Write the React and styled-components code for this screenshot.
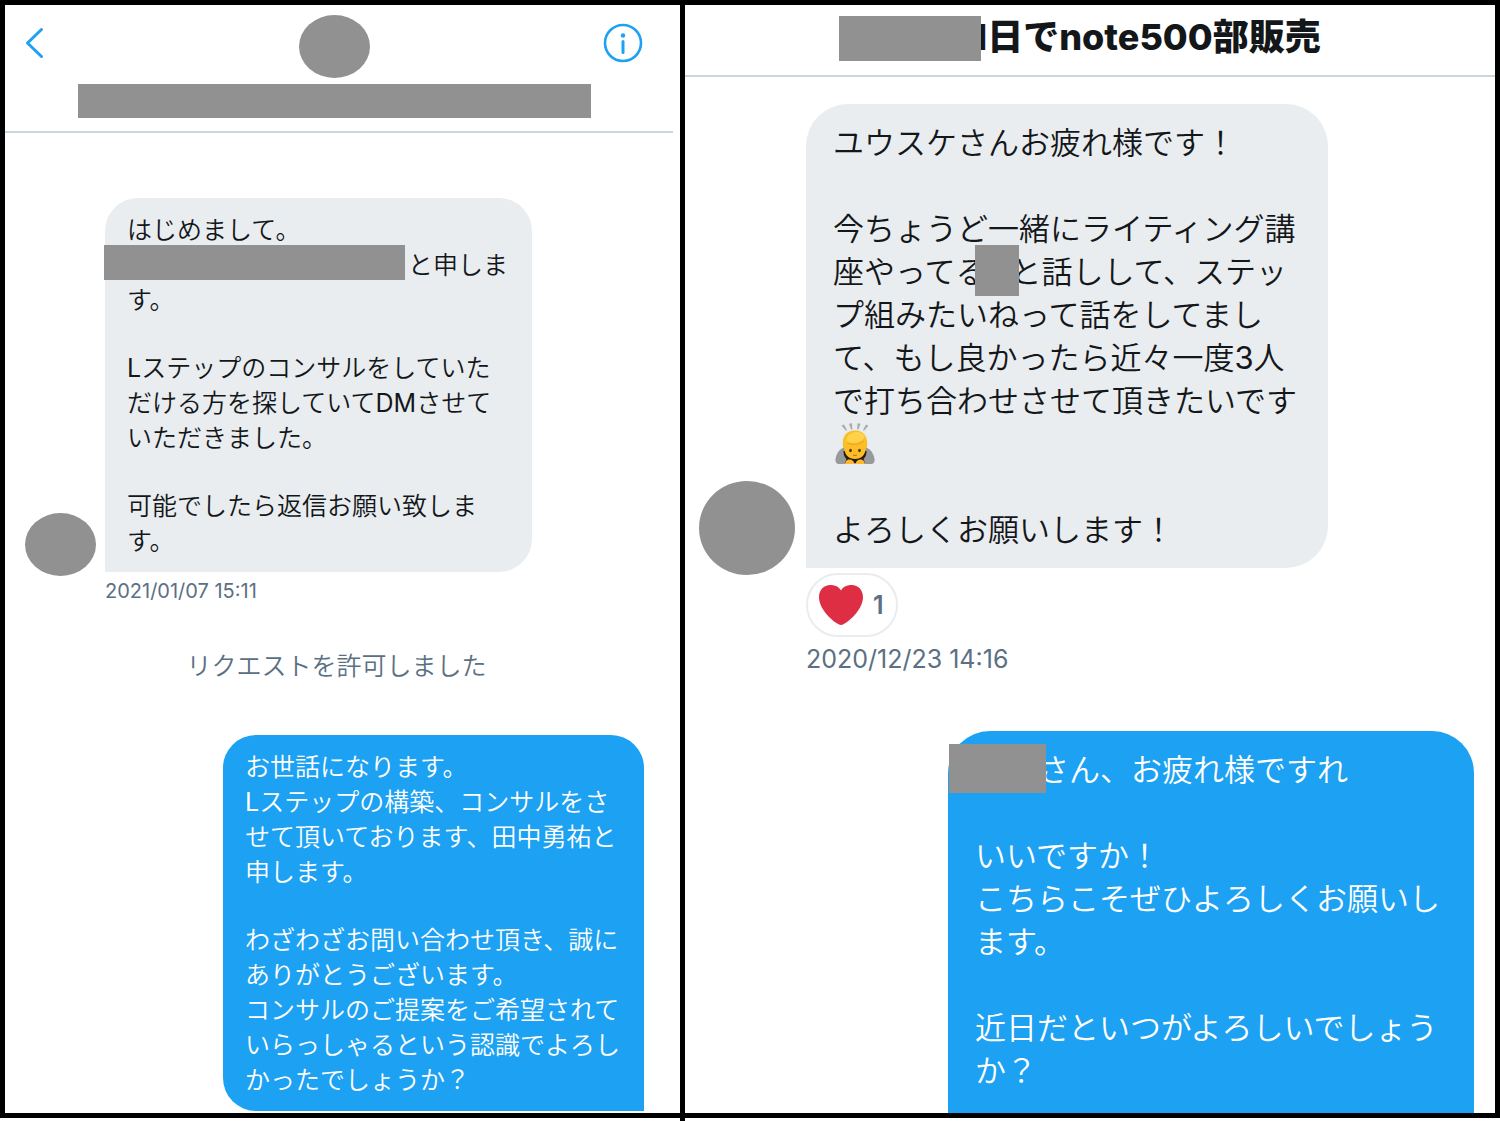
import React from 'react';
import styled, { createGlobalStyle, css } from 'styled-components';

const GlobalStyle = createGlobalStyle`
  * {
    box-sizing: border-box;
  }
  body {
    margin: 0;
    background: #fff;
    color: #14171a;
    font-family: Inter, 'Noto Sans CJK JP', sans-serif;
  }
  p, h1 {
    margin: 0;
  }
`;

const Board = styled.div`
  display: grid;
  grid-template-columns: minmax(0, 680fr) 5px minmax(0, 815fr);
  min-height: 100vh;
`;

const Divider = styled.div`
  background: #000;
`;

const Pane = styled.section`
  display: flex;
  flex-direction: column;
  margin-bottom: 3px;
  border: 5px solid #000;
  border-${({ $open }) => $open}-width: 0;
`;

const ProfileHeader = styled.header`
  display: grid;
  grid-template-columns: 1fr auto 1fr;
  align-items: start;
  row-gap: 6px;
  margin-right: 7px;
  padding: 10px 30px 13px 20px;
  border-bottom: 2px solid #c8d6dd;
`;

const IconButton = styled.button`
  display: flex;
  justify-self: ${({ $side }) => $side};
  margin-top: 8px;
  padding: 0;
  border: 0;
  background: none;
  color: #1da1f2;
  cursor: pointer;
`;

const HiddenName = styled.div`
  grid-column: 1 / -1;
  justify-self: center;
  width: 513px;
  max-width: 100%;
  height: 34px;
  background: #919191;
`;

const TitleHeader = styled.header`
  display: flex;
  justify-content: center;
  padding: 8px 20px 13px 0;
  border-bottom: 2px solid #c8d6dd;
`;

const Title = styled.h1`
  font-size: 36px;
  font-weight: 800;
  line-height: 49px;
`;

const Avatar = styled.div`
  flex: none;
  width: ${({ $large }) => ($large ? 96 : 71)}px;
  height: ${({ $large }) => ($large ? 94 : 63)}px;
  margin-bottom: ${({ $drop }) => -($drop || 0)}px;
  border-radius: 50%;
  background: #919191;
`;

const Thread = styled.div`
  display: flex;
  flex: 1;
  flex-direction: column;
  padding: ${({ $large }) => ($large ? '27px 21px 0 14px' : '65px 36px 2px 20px')};
`;

const Received = styled.div`
  display: flex;
  align-items: flex-end;
  gap: ${({ $large }) => ($large ? 11 : 9)}px;
`;

const smallText = css`
  gap: 33px;
  padding: 15px 22px 13px;
  border-radius: 33px;
  font-size: 25px;
  line-height: 35px;
`;

const largeText = css`
  gap: 43px;
  padding: 17px 27px;
  border-radius: 42px;
  font-size: 31px;
  line-height: 43px;
`;

const lightText = css`
  font-family: Inter, 'Noto Sans CJK JP DemiLight', 'Noto Sans CJK JP', sans-serif;
`;

const Bubble = styled.div`
  display: flex;
  flex-direction: column;
  ${lightText};
  ${({ $large }) => ($large ? largeText : smallText)};
`;

const ReceivedBubble = styled(Bubble)`
  max-width: ${({ $large }) => ($large ? 522 : 427)}px;
  border-bottom-left-radius: 0;
  background: #e9edf0;
`;

const SentBubble = styled(Bubble)`
  align-self: flex-end;
  max-width: ${({ $large }) => ($large ? 526 : 421)}px;
  border-bottom-right-radius: 0;
  background: #1da1f2;
  color: #fff;
  ${({ $cut }) => $cut && 'flex: 1; border-bottom-left-radius: 0;'}
`;

// covers part of the line, so it sits over the neighbouring letters
const Redacted = styled.span`
  position: relative;
  top: -${({ $lift = 4 }) => $lift}px;
  display: inline-block;
  width: ${({ $width }) => $width}px;
  height: ${({ $height }) => $height}px;
  margin: -10px ${({ $right }) => $right}px -10px ${({ $left }) => $left}px;
  vertical-align: middle;
  background: #919191;
`;

const Meta = styled.div`
  display: flex;
  flex-direction: column;
  align-items: flex-start;
  padding-left: ${({ $large }) => ($large ? 107 : 80)}px;
`;

const Time = styled.time`
  margin-top: 7px;
  color: #5b7083;
  font-size: ${({ $large }) => ($large ? 25 : 20)}px;
  line-height: ${({ $large }) => ($large ? 30 : 24)}px;
`;

const Notice = styled.p`
  margin: 46px 0 51px;
  padding-left: 4px;
  color: #5b7083;
  font-size: 25px;
  ${lightText};
  line-height: 35px;
  text-align: center;
`;

const Reaction = styled.button`
  display: flex;
  align-items: center;
  gap: 9px;
  height: 64px;
  margin-top: 5px;
  padding: 0 12px 0 10px;
  border: 2px solid #e9edf0;
  border-radius: 32px;
  background: #fff;
  color: #5b7083;
  font: 600 25px Inter, sans-serif;
`;

const Spacer = styled.div`
  height: 57px;
`;

const Emoji = styled.svg`
  display: block;
  width: 43px;
  height: 43px;
`;

const BackIcon = () => (
  <svg width="20" height="38" viewBox="0 0 20 38" fill="none" stroke="currentColor" strokeWidth="3" strokeLinecap="round" strokeLinejoin="round">
    <path d="M16.500 6.500 2.500 20l14 13.500" />
  </svg>
);

const InfoIcon = () => (
  <svg width="40" height="40" viewBox="0 0 40 40" fill="none" stroke="currentColor">
    <circle cx="20" cy="20" r="18" strokeWidth="2.6" />
    <path d="M20 18.500v11" strokeWidth="3" strokeLinecap="round" />
    <circle cx="20" cy="12.500" r="2.200" fill="currentColor" stroke="none" />
  </svg>
);

const HeartIcon = () => (
  <svg width="46" height="42" viewBox="0 0 46 42">
    <path d="M23 6.500C26 1.500 30.500 1 33.500 1 40.500 1 45 6.500 45 13c0 11-11 22.500-19.500 27.200-1.700 1-3.300 1-5 0C12 35.500 1 24 1 13 1 6.500 5.500 1 12.500 1c3 0 7.500.5 10.500 5.500Z" fill="#dd2e44" />
  </svg>
);

const BowIcon = () => (
  <Emoji viewBox="0 0 43 43" role="img" aria-label="お辞儀">
    <g fill="#a9abad">
      <path d="M8.500 3.500 11 2.500l3 5.500-1.200.8Z" />
      <path d="m16 1.800 3-.5.300 6-1.300.2Z" />
      <path d="m24.500 1.300 3 .5-2 5.700-1.300-.2Z" />
      <path d="m33 2.500 2.500 1.200-4.500 5-1-.8Z" />
    </g>
    <path d="M12 25C7 26.500 3.500 31 2.500 37c-.5 3 1 5 4 5h31c3 0 4.500-2 4-5C40.500 31 37 26.500 32 25Z" fill="#97999b" />
    <path d="M10.500 29c0 5 2 7 3 8l-1.500 4h20l-1.500-4c1-1 3-3 3-8Z" fill="#1f1c18" />
    <path d="M11.500 19h21v8c0 6-4.500 10-10.500 10s-10.500-4-10.500-10Z" fill="#fdbd27" />
    <path d="M10 25c-1.500-10 3-16.500 12-16.500S35.500 15 34 25l-2 3c0-3-.5-4.500-2-6-5 2-9 1.500-13-.5-3 1-5 3-5 6.500Z" fill="#f8bf27" />
    <path d="M13 19c1-6 5-9 11-9 4 0 7 2 8 5-3 5-12 8-19 4Z" fill="#ffd24a" />
    <path d="M14 20.500c5 3 12 2.500 17-1.500" stroke="#e5a520" fill="none" />
    <ellipse cx="17.500" cy="28.500" rx="1.400" ry="1.700" fill="#5b3511" />
    <ellipse cx="26.500" cy="28.500" rx="1.400" ry="1.700" fill="#5b3511" />
    <path d="M20 33q2 1 4 0" stroke="#b97312" fill="none" />
    <path d="M12.500 42c-.5-3 1.500-4.500 4-4.500 2.500 0 4.500 1.500 5 4.500Zm10 0c.5-3 2.500-4.500 5-4.500s4.500 1.500 4 4.500Z" fill="#ffb82a" />
  </Emoji>
);

const RequestPane = () => {
  return (
    <Pane $open="right">
      <ProfileHeader>
        <IconButton $side="start" aria-label="戻る">
          <BackIcon />
        </IconButton>
        <Avatar />
        <IconButton $side="end" aria-label="詳細">
          <InfoIcon />
        </IconButton>
        <HiddenName />
      </ProfileHeader>
      <Thread>
        <Received>
          <Avatar $drop={4} />
          <ReceivedBubble>
            <p>
              はじめまして。
              <br />
              <Redacted $width={301} $height={35} $left={-23} $right={3} $lift={5} />
              と申します。
            </p>
            <p>Lステップのコンサルをしていただける方を探していてDMさせていただきました。</p>
            <p>可能でしたら返信お願い致します。</p>
          </ReceivedBubble>
        </Received>
        <Meta>
          <Time>2021/01/07 15:11</Time>
        </Meta>
        <Notice>リクエストを許可しました</Notice>
        <SentBubble>
          <p>
            お世話になります。
            <br />
            Lステップの構築、コンサルをさせて頂いております、田中勇祐と申します。
          </p>
          <p>
            わざわざお問い合わせ頂き、誠にありがとうございます。
            <br />
            コンサルのご提案をご希望されていらっしゃるという認識でよろしかったでしょうか？
          </p>
        </SentBubble>
      </Thread>
    </Pane>
  );
};

const GroupPane = () => {
  return (
    <Pane $open="left">
      <TitleHeader>
        <Title>
          <Redacted $width={142} $height={45} $left={0} $right={-10} $lift={2} />
          1日でnote500部販売
        </Title>
      </TitleHeader>
      <Thread $large>
        <Received $large>
          <Avatar $large $drop={7} />
          <ReceivedBubble $large>
            <p>ユウスケさんお疲れ様です！</p>
            <p>
              今ちょうど一緒にライティング講
              <br />
              座やってる
              <Redacted $width={44} $height={51} $left={-11} $right={-9} />
              と話しして、ステッ
              <br />
              プ組みたいねって話をしてまして、もし良かったら近々一度3人で打ち合わせさせて頂きたいです
              <BowIcon />
            </p>
            <p>よろしくお願いします！</p>
          </ReceivedBubble>
        </Received>
        <Meta $large>
          <Reaction>
            <HeartIcon />1
          </Reaction>
          <Time $large>2020/12/23 14:16</Time>
        </Meta>
        <Spacer />
        <SentBubble $large $cut>
          <p>
            <Redacted $width={97} $height={49} $left={-26} $right={-8} />
            さん、お疲れ様ですれ
          </p>
          <p>
            いいですか！
            <br />
            こちらこそぜひよろしくお願いします。
          </p>
          <p>近日だといつがよろしいでしょうか？</p>
        </SentBubble>
      </Thread>
    </Pane>
  );
};

const App = () => {
  return (
    <>
      <GlobalStyle />
      <Board>
        <RequestPane />
        <Divider />
        <GroupPane />
      </Board>
    </>
  );
};

export default App;
